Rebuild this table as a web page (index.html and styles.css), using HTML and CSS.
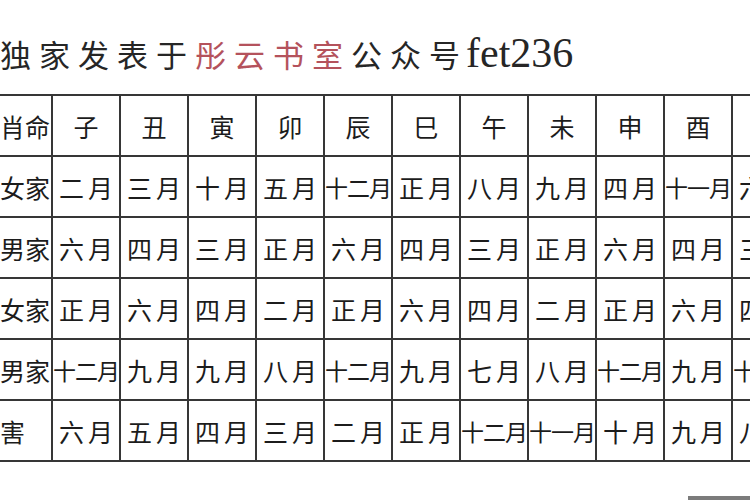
FILE: index.html
```html
<!DOCTYPE html>
<html lang="zh-CN">
<head>
<meta charset="utf-8">
<title>嫁娶月表</title>
<link rel="stylesheet" href="styles.css">
</head>
<body>
<div class="page">
  <div class="title">
    <span class="cjk">独家发表于</span><span class="cjk red">彤云书室</span><span class="cjk">公众号</span><span class="latin">fet236</span>
  </div>
  <div class="grid">
    <div class="c side">肖命</div>
    <div class="c">子</div><div class="c">丑</div><div class="c">寅</div><div class="c">卯</div><div class="c">辰</div>
    <div class="c">巳</div><div class="c">午</div><div class="c">未</div><div class="c">申</div><div class="c">酉</div><div class="c">戌</div>

    <div class="c side">女家</div>
    <div class="c">二月</div><div class="c">三月</div><div class="c">十月</div><div class="c">五月</div><div class="c t">十二月</div>
    <div class="c">正月</div><div class="c">八月</div><div class="c">九月</div><div class="c">四月</div><div class="c t">十一月</div><div class="c">六月</div>

    <div class="c side">男家</div>
    <div class="c">六月</div><div class="c">四月</div><div class="c">三月</div><div class="c">正月</div><div class="c">六月</div>
    <div class="c">四月</div><div class="c">三月</div><div class="c">正月</div><div class="c">六月</div><div class="c">四月</div><div class="c">三月</div>

    <div class="c side">女家</div>
    <div class="c">正月</div><div class="c">六月</div><div class="c">四月</div><div class="c">二月</div><div class="c">正月</div>
    <div class="c">六月</div><div class="c">四月</div><div class="c">二月</div><div class="c">正月</div><div class="c">六月</div><div class="c">四月</div>

    <div class="c side">男家</div>
    <div class="c t">十二月</div><div class="c">九月</div><div class="c">九月</div><div class="c">八月</div><div class="c t">十二月</div>
    <div class="c">九月</div><div class="c">七月</div><div class="c">八月</div><div class="c t">十二月</div><div class="c">九月</div><div class="c t">十二月</div>

    <div class="c side hai">害</div>
    <div class="c">六月</div><div class="c">五月</div><div class="c">四月</div><div class="c">三月</div><div class="c">二月</div>
    <div class="c">正月</div><div class="c t">十二月</div><div class="c t">十一月</div><div class="c">十月</div><div class="c">九月</div><div class="c">八月</div>
  </div>
  <div class="mark"></div>
</div>
</body>
</html>
```

FILE: styles.css
```css
html, body {
  margin: 0;
  padding: 0;
  background: #ffffff;
}

.page {
  position: relative;
  width: 750px;
  height: 500px;
  overflow: hidden;
  background: #ffffff;
  color: #1f1f1f;
  font-family: "Noto Sans CJK SC", "Noto Sans", sans-serif;
}

.title {
  height: 94px;
  box-sizing: border-box;
  padding-top: 12px;
  display: flex;
  align-items: center;
  white-space: nowrap;
}

.title .cjk {
  font-size: 31px;
  letter-spacing: 8px;
  color: #262626;
}

.title .red {
  color: #b4525c;
}

.title .latin {
  font-family: "Liberation Serif", "DejaVu Serif", serif;
  font-size: 42px;
  color: #262626;
  margin-left: -2px;
}

.grid {
  display: grid;
  grid-template-columns: 51px repeat(11, 66px);
  grid-auto-rows: 59px;
  gap: 2px;
  padding: 2px 0;
  background: #363636;
  width: max-content;
}

.c {
  background: #ffffff;
  display: flex;
  align-items: center;
  justify-content: center;
  font-size: 25px;
  letter-spacing: 4px;
  padding-left: 4px;
  white-space: nowrap;
  color: #1c1c1c;
}

.c.t {
  font-size: 23px;
  letter-spacing: -1px;
  padding-left: 0;
}

.c.side {
  justify-content: flex-end;
  letter-spacing: 0;
  padding-left: 0;
  padding-right: 1px;
  font-size: 25px;
  overflow: hidden;
}

.c.side.hai {
  padding-right: 26px;
}

.mark {
  position: absolute;
  right: 0;
  bottom: 0;
  width: 62px;
  height: 4px;
  background: #7b7b7b;
}
```
